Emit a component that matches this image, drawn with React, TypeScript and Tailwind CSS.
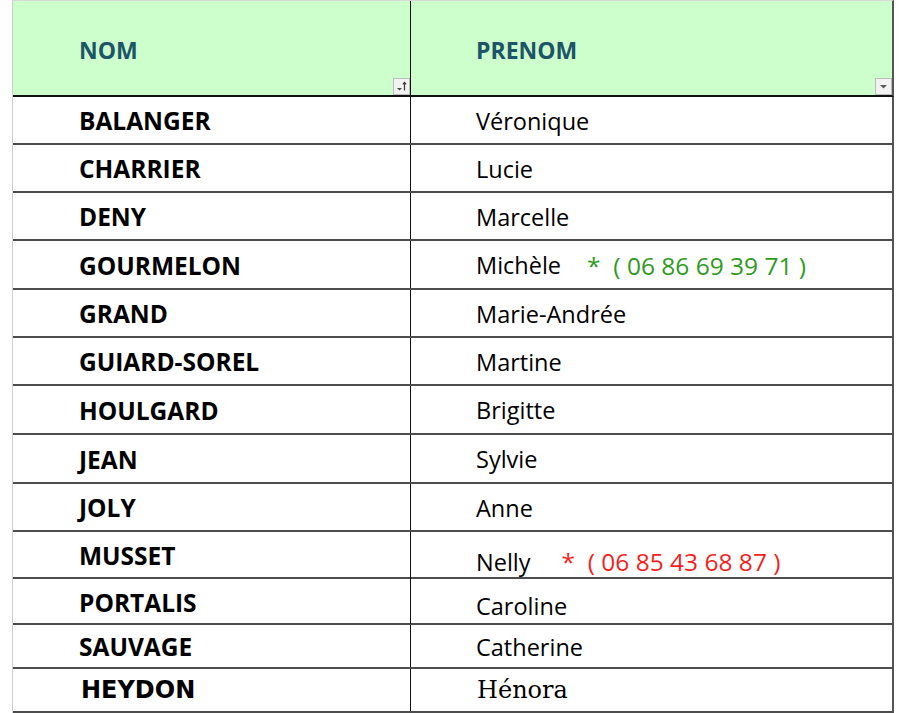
const rows: {
  nom: string;
  prenom: string;
  h: string;
  note?: { text: string; color: string; gap: string };
  prenomPad?: string;
  nomPad?: string;
}[] = [
  { nom: "BALANGER", prenom: "Véronique", h: "h-[48px]" },
  { nom: "CHARRIER", prenom: "Lucie", h: "h-[48px]" },
  { nom: "DENY", prenom: "Marcelle", h: "h-[48px]" },
  {
    nom: "GOURMELON",
    prenom: "Michèle",
    h: "h-[49px]",
    note: { text: "*  ( 06 86 69 39 71 )", color: "text-[#2e9a1e]", gap: "ml-[26px]" },
  },
  { nom: "GRAND", prenom: "Marie-Andrée", h: "h-[48px]" },
  { nom: "GUIARD-SOREL", prenom: "Martine", h: "h-[48px]" },
  { nom: "HOULGARD", prenom: "Brigitte", h: "h-[49px]" },
  { nom: "JEAN", prenom: "Sylvie", h: "h-[49px]" },
  { nom: "JOLY", prenom: "Anne", h: "h-[48px]" },
  {
    nom: "MUSSET",
    prenom: "Nelly",
    h: "h-[47px]",
    prenomPad: "pt-[12px]",
    nomPad: "pt-[0px]",
    note: { text: "*  ( 06 85 43 68 87 )", color: "text-[#f51f1f]", gap: "ml-[31px]" },
  },
  { nom: "PORTALIS", prenom: "Caroline", h: "h-[46px]", prenomPad: "pt-[10px]" },
  { nom: "SAUVAGE", prenom: "Catherine", h: "h-[44px]" },
];

function SortButton() {
  return (
    <div className="w-[17px] h-[17px] bg-[#f2f2f2] border border-[#bdbdbd] flex items-center justify-center">
      <svg width="13" height="13" viewBox="0 0 13 13">
        <path d="M2 8h5l-2.5 2.5z" fill="#4a4a4a" />
        <path d="M9.5 2.5v8" stroke="#3a3a3a" strokeWidth="1.2" />
        <path d="M7.8 4.4l1.7-2 1.7 2" stroke="#3a3a3a" strokeWidth="1.1" fill="none" />
      </svg>
    </div>
  );
}

function DropButton() {
  return (
    <div className="w-[17px] h-[17px] bg-[#f2f2f2] border border-[#bdbdbd] flex items-center justify-center">
      <svg width="13" height="13" viewBox="0 0 13 13">
        <path d="M3 5h7l-3.5 3.5z" fill="#5a5a5a" />
      </svg>
    </div>
  );
}

export default function App() {
  return (
    <div className="w-[900px] h-[713px] bg-white overflow-hidden font-['Open_Sans',sans-serif]">
      <div className="ml-[12px] w-[882px] border-l border-[#cfcfcf]">
        {/* header */}
        <div className="grid grid-cols-[398px_1fr] h-[97px] bg-[#ccffcc] border-t border-[#d8d8d8] border-b-2 border-b-[#111] border-r-2 border-r-[#555]">
          <div className="relative border-r-[1.5px] border-[#111] flex items-center pl-[66px] pt-[4px]">
            <span className="text-[23px] font-bold text-[#1d5467]">NOM</span>
            <div className="absolute right-0 bottom-0">
              <SortButton />
            </div>
          </div>
          <div className="relative flex items-center pl-[65px] pt-[4px]">
            <span className="text-[23px] font-bold text-[#1d5467]">PRENOM</span>
            <div className="absolute right-0 bottom-0">
              <DropButton />
            </div>
          </div>
        </div>

        {rows.map((r) => (
          <div
            key={r.nom}
            className={`grid grid-cols-[398px_1fr] ${r.h} border-b-2 border-[#4d4d4d] border-r-2 border-r-[#555]`}
          >
            <div className={`border-r-[1.5px] border-[#111] flex items-center pl-[66px] ${r.nomPad ?? "pt-[3px]"}`}>
              <span className="text-[24.5px] font-bold text-black">{r.nom}</span>
            </div>
            <div className={`flex items-center pl-[65px] ${r.prenomPad ?? "pt-[3px]"}`}>
              <span className="text-[23.5px] text-black">{r.prenom}</span>
              {r.note && (
                <span className={`text-[24.5px] whitespace-pre ${r.note.color} ${r.note.gap}`}>
                  {r.note.text}
                </span>
              )}
            </div>
          </div>
        ))}

        {/* last row, pasted in a different font */}
        <div className="grid grid-cols-[398px_1fr] h-[44px] border-b-2 border-[#4d4d4d] border-r-2 border-r-[#555]">
          <div className="border-r-[1.5px] border-[#111] flex items-center pl-[68px]">
            <span className="text-[24px] font-bold text-black font-['DejaVu_Sans',sans-serif]">HEYDON</span>
          </div>
          <div className="flex items-center pl-[66px]">
            <span className="text-[24px] text-black font-['DejaVu_Serif',serif]">Hénora</span>
          </div>
        </div>
      </div>
    </div>
  );
}
